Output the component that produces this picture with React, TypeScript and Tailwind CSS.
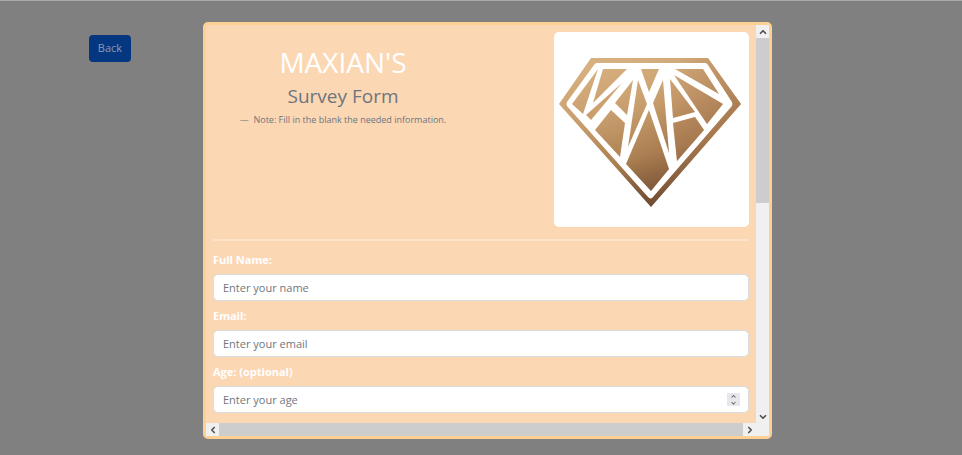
import React from "react";
import { ChevronDown, ChevronLeft, ChevronRight, ChevronUp } from "lucide-react";

const facets = [
  "598,69 583,114 572,104",
  "603,69 627,69 593,103",
  "622,83 586,115 591,120",
  "633,80 615,103 627,115",
  "611,110 625,123 620,157 595,130",
  "638,80 647,104 628,147",
  "641,69 659,69 649,92",
  "663,80 653,103 669,153",
  "649,110 626,164 651,191 669,169",
  "670,79 673,118 695,112",
  "673,123 695,117 704,130 677,161",
  "674,75 723,104 707,124",
  "675,69 703,69 719,94",
];

function Logo() {
  return (
    <svg viewBox="554 32 195 195" className="w-full" role="img" aria-label="Maxian's diamond logo">
      <defs>
        <linearGradient id="gold" gradientUnits="userSpaceOnUse" x1="625" y1="58" x2="665" y2="206">
          <stop offset="0" stopColor="#d7b07f" />
          <stop offset="0.35" stopColor="#c79c6c" />
          <stop offset="0.65" stopColor="#ac8152" />
          <stop offset="0.85" stopColor="#7f5a3a" />
          <stop offset="1" stopColor="#583a24" />
        </linearGradient>
        <linearGradient id="shade" gradientUnits="userSpaceOnUse" x1="660" y1="90" x2="735" y2="130">
          <stop offset="0" stopColor="#9a6848" stopOpacity="0" />
          <stop offset="1" stopColor="#9a6848" stopOpacity="0.5" />
        </linearGradient>
      </defs>
      {["url(#gold)", "url(#shade)"].map((paint) => (
        <g key={paint} fill={paint}>
          <path
            fillRule="evenodd"
            d="M591 58H708L741 104L651 207L559 104ZM597 63Q595 63 594 65L567 102Q566 104 567 106L648 197Q651 200 653 197L732 106Q733 104 732 102L708 65Q707 63 705 63Z"
          />
          {facets.map((points) => (
            <polygon key={points} points={points} />
          ))}
        </g>
      ))}
    </svg>
  );
}

function Field({ id, label, type, placeholder }: { id: string; label: string; type: string; placeholder: string }) {
  return (
    <div className="mb-[6px]">
      <label htmlFor={id} className="mb-[5px] block text-[11px] leading-[18px] font-bold text-white">
        {label}
      </label>
      <div className="relative">
        <input
          id={id}
          type={type}
          placeholder={placeholder}
          className="block h-[27px] w-full appearance-none rounded-[5px] border border-[#d9dce0] bg-white px-[9px] text-[11px] text-gray-800 [appearance:textfield] placeholder:text-[#70777e]"
        />
        {type === "number" && (
          <div className="absolute top-[7px] right-[9px] flex h-[13px] w-[13px] flex-col items-center justify-center bg-[#e8e8ec] text-[#777777]">
            <ChevronUp size={7} strokeWidth={4} />
            <ChevronDown size={7} strokeWidth={4} />
          </div>
        )}
      </div>
    </div>
  );
}

const scrollButton = "flex h-[13px] w-[13px] shrink-0 items-center justify-center bg-[#f0f0f0] text-[#505050]";

export default function App() {
  return (
    <div className="flex min-h-screen items-start border-t border-[#a8aaaa] bg-[#808080] pr-[190px] font-['Open_Sans','Noto_Sans',sans-serif]">
      <div className="w-[203px] shrink-0 pt-[34px] pl-[89px]">
        <button type="button" className="block h-[27px] w-[42px] rounded-[4px] bg-[#043780] text-[11px] text-[#8c9bb5]">
          Back
        </button>
      </div>
      <main className="mt-[21px] mb-[15px] min-w-0 flex-1 rounded-[5px] border-[3px] border-[#fdd093] bg-[#fcd7b4]">
        <div className="flex">
          <form className="min-w-0 flex-1 px-[7px] pt-[7px] pb-[4px]">
            <header className="flex items-start justify-between">
              <div className="w-1/2 pt-[13px] pr-2 text-center">
                <h1 className="text-[28px] leading-[34px] text-white">MAXIAN'S</h1>
                <h2 className="text-[19px] leading-[34px] text-[#6c757d]">Survey Form</h2>
                <p className="text-[9px] leading-[14px] text-[#6c757d]">—&nbsp; Note: Fill in the blank the needed information.</p>
              </div>
              <div className="w-[195px] shrink-0 rounded-[5px] bg-white">
                <Logo />
              </div>
            </header>
            <hr className="mt-[12px] mb-[10px] border-t-2 border-[#fde1c8]" />
            <Field id="name" label="Full Name:" type="text" placeholder="Enter your name" />
            <Field id="email" label="Email:" type="email" placeholder="Enter your email" />
            <Field id="age" label="Age: (optional)" type="number" placeholder="Enter your age" />
          </form>
          <div className="flex w-[13px] flex-col bg-[#f0f0f0]">
            <button type="button" aria-label="Scroll up" className={scrollButton}>
              <ChevronUp size={10} strokeWidth={4} />
            </button>
            <div className="h-[165px] bg-[#cdcdcd]" />
            <button type="button" aria-label="Scroll down" className={scrollButton + " mt-auto"}>
              <ChevronDown size={10} strokeWidth={4} />
            </button>
          </div>
        </div>
        <div className="flex bg-[#f0f0f0] pr-[13px]">
          <button type="button" aria-label="Scroll left" className={scrollButton}>
            <ChevronLeft size={10} strokeWidth={4} />
          </button>
          <div className="flex-1 bg-[#cdcdcd]" />
          <button type="button" aria-label="Scroll right" className={scrollButton}>
            <ChevronRight size={10} strokeWidth={4} />
          </button>
        </div>
      </main>
    </div>
  );
}
